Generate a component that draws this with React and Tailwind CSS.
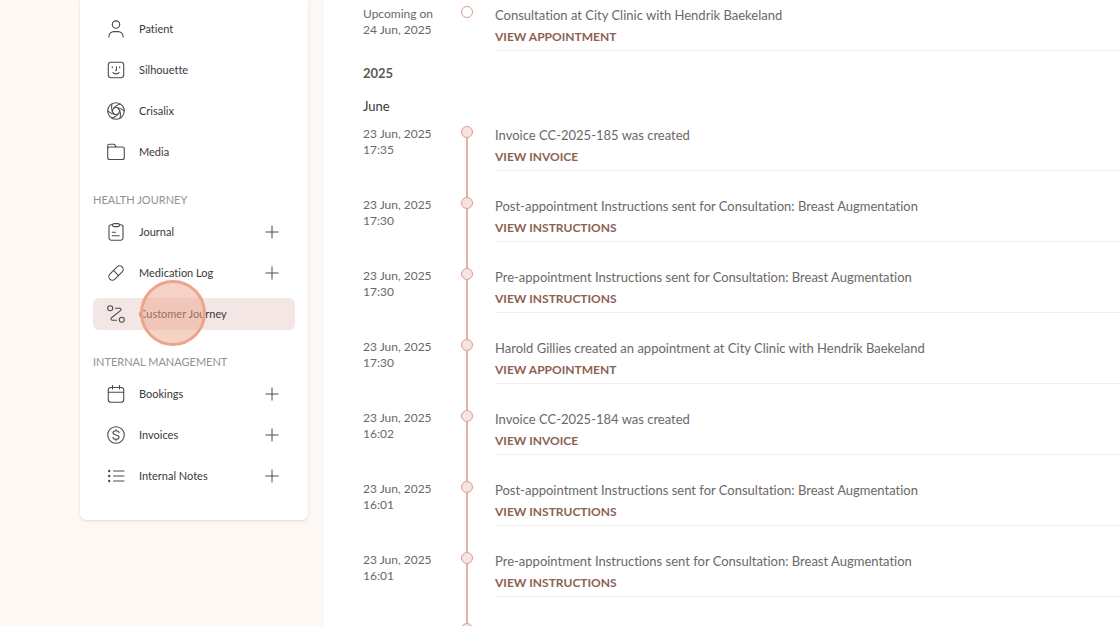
const PatientIcon = () => (
  <>
    <circle cx="9" cy="4.6" r="3.7" />
    <path d="M2 17v-.7a4.7 4.7 0 0 1 4.7-4.7h4.6a4.7 4.7 0 0 1 4.7 4.7v.7" />
  </>
)

const SilhouetteIcon = () => (
  <>
    <rect x="1.3" y="1.3" width="15.4" height="15.4" rx="2.6" />
    <path d="M5.3 5.8v1M12.7 5.8v1M9.4 5.8v3.2q0 .8-.9.8M6 11.7q3 2.4 6 0" />
  </>
)

const CrisalixIcon = () => (
  <>
    <circle cx="9" cy="9" r="8.3" />
    {[0, 60, 120, 180, 240, 300].map((angle) => (
      <path key={angle} d="M5.2 9.4Q6.4 4.3 13 1.9" transform={`rotate(${angle} 9 9)`} />
    ))}
  </>
)

const MediaIcon = () => (
  <>
    <path d="M.7 5V3a1.8 1.8 0 0 1 1.8-1.8h4.2q.9 0 1.3.8l.9 2h6.4a2 2 0 0 1 2 2v8.5a2 2 0 0 1-2 2H2.7a2 2 0 0 1-2-2z" />
    <path d="M.7 5.2q.5-1.2 2-1.2h6.2" />
  </>
)

const JournalIcon = () => (
  <>
    <path d="M5.5 1.8H4.2A2.2 2.2 0 0 0 2 4v11a2.2 2.2 0 0 0 2.2 2.2h9.6A2.2 2.2 0 0 0 16 15V4a2.2 2.2 0 0 0-2.2-2.2h-1.3" />
    <rect x="5.5" y=".6" width="7" height="3" rx="1.5" />
    <path d="M5.3 9.3h3.2M5.3 12.8h7" />
  </>
)

const MedicationIcon = () => (
  <g transform="rotate(-45 9 9)">
    <rect x=".3" y="5.4" width="17.4" height="7.2" rx="3.6" />
    <path d="M9 5.4v7.2" />
  </g>
)

const JourneyIcon = () => (
  <>
    <circle cx="3.2" cy="3.2" r="2.5" />
    <circle cx="14.8" cy="14.8" r="2.5" />
    <path d="M8.5 3.2h4.2q2.2.5.8 2.4L4.5 12.8q-1.4 2 .8 2.5h4.2" />
  </>
)

const BookingsIcon = () => (
  <>
    <rect x="1.3" y="2.5" width="15.4" height="14.8" rx="2.6" />
    <path d="M1.3 7.2h15.4M5.5.5v3.5M12.5.5v3.5" />
  </>
)

const InvoicesIcon = () => (
  <>
    <circle cx="9" cy="9" r="8.3" />
    <path d="M9 3.5v1.2M9 13.3v1.2M12 6.8c0-1.3-1.2-2.1-3-2.1s-3 .8-3 2.1c0 3 6 1.4 6 4.4 0 1.3-1.2 2.1-3 2.1s-3-.8-3-2.1" />
  </>
)

const NotesIcon = () => (
  <>
    <path d="M6.5 4H17M6.5 9H17M6.5 14H17" />
    <path strokeWidth="2.4" d="M2.2 4h.01M2.2 9h.01M2.2 14h.01" />
  </>
)

const sections = [
  {
    title: null,
    items: [
      { label: 'Patient', icon: PatientIcon },
      { label: 'Silhouette', icon: SilhouetteIcon },
      { label: 'Crisalix', icon: CrisalixIcon },
      { label: 'Media', icon: MediaIcon },
    ],
  },
  {
    title: 'HEALTH JOURNEY',
    items: [
      { label: 'Journal', icon: JournalIcon, canAdd: true },
      { label: 'Medication Log', icon: MedicationIcon, canAdd: true },
      { label: 'Customer Journey', icon: JourneyIcon, active: true },
    ],
  },
  {
    title: 'INTERNAL MANAGEMENT',
    items: [
      { label: 'Bookings', icon: BookingsIcon, canAdd: true },
      { label: 'Invoices', icon: InvoicesIcon, canAdd: true },
      { label: 'Internal Notes', icon: NotesIcon, canAdd: true },
    ],
  },
]

const events = [
  { time: '17:35', title: 'Invoice CC-2025-185 was created', action: 'VIEW INVOICE' },
  { time: '17:30', title: 'Post-appointment Instructions sent for Consultation: Breast Augmentation', action: 'VIEW INSTRUCTIONS' },
  { time: '17:30', title: 'Pre-appointment Instructions sent for Consultation: Breast Augmentation', action: 'VIEW INSTRUCTIONS' },
  { time: '17:30', title: 'Harold Gillies created an appointment at City Clinic with Hendrik Baekeland', action: 'VIEW APPOINTMENT' },
  { time: '16:02', title: 'Invoice CC-2025-184 was created', action: 'VIEW INVOICE' },
  { time: '16:01', title: 'Post-appointment Instructions sent for Consultation: Breast Augmentation', action: 'VIEW INSTRUCTIONS' },
  { time: '16:01', title: 'Pre-appointment Instructions sent for Consultation: Breast Augmentation', action: 'VIEW INSTRUCTIONS' },
  { time: '16:01', title: 'Harold Gillies created an appointment at City Clinic with Hendrik Baekeland', action: 'VIEW APPOINTMENT' },
]

const NavItem = ({ item }) => {
  const Icon = item.icon
  return (
    <li className={`relative flex h-8 items-center rounded-md pr-4 pl-3.5 ${item.active ? 'bg-[#f4e6e4]' : ''}`}>
      <a href="#" className="flex flex-1 items-center gap-3.5 text-[11px] text-[#3a3837]">
        <svg viewBox="0 0 18 18" fill="none" stroke="#4d4b4a" strokeWidth="1.1" strokeLinecap="round" strokeLinejoin="round" className="size-[18px] shrink-0" aria-hidden="true">
          <Icon />
        </svg>
        {item.label}
      </a>
      {item.canAdd && (
        <button type="button" aria-label={`Add ${item.label}`}>
          <svg viewBox="0 0 14 14" fill="none" stroke="#4d4b4a" className="size-3.5" aria-hidden="true">
            <path d="M7 .5v13M.5 7h13" />
          </svg>
        </button>
      )}
      {item.active && (
        <span className="pointer-events-none absolute -top-[18px] left-[47px] size-[66px] rounded-full border-3 border-[#eba58c] bg-[#eba58c]/50" />
      )}
    </li>
  )
}

const TimelineRow = ({ lines, title, action, upcoming }) => (
  <li className="flex">
    <div className="w-[98px] shrink-0 text-xs leading-4 text-[#6b6866]">
      <div>{lines[0]}</div>
      <div>{lines[1]}</div>
    </div>
    <div className="mr-[22px] flex w-3 shrink-0 flex-col items-center">
      <span className={`size-3 shrink-0 rounded-full border border-[#d99f8c] ${upcoming ? 'bg-white' : 'bg-[#f7e3df]'}`} />
      {!upcoming && <span className="w-0.5 flex-1 bg-[#e0b3a4]" />}
    </div>
    <div className={`min-w-0 flex-1 ${upcoming ? '' : 'pb-[26px]'}`}>
      <div className="border-b border-[#f0efee] pb-[3px]">
        <p className="text-[13px] leading-[18px] text-[#6b6866]">{title}</p>
        <a href="#" className="mt-[3px] block text-xs leading-5 font-bold text-[#8b6250]">{action}</a>
      </div>
    </div>
  </li>
)

const App = () => {
  return (
    <div className="flex h-screen items-start overflow-hidden bg-[#fef8f4] font-['Lato',sans-serif] [font-variant-ligatures:none]">
      <nav className="mr-4 ml-20 w-[228px] shrink-0 rounded-b-md bg-white px-[13px] pt-[13px] pb-7 shadow">
        {sections.map((section, index) => (
          <div key={index}>
            {section.title && (
              <h2 className="mt-6 mb-2 text-[11px] leading-4 text-[#94918f]">{section.title}</h2>
            )}
            <ul className="space-y-[9px]">
              {section.items.map((item) => (
                <NavItem key={item.label} item={item} />
              ))}
            </ul>
          </div>
        ))}
      </nav>

      <main className="min-h-screen min-w-0 flex-1 bg-white pt-1.5 pl-[39px]">
        <ul>
          <TimelineRow
            lines={['Upcoming on', '24 Jun, 2025']}
            title="Consultation at City Clinic with Hendrik Baekeland"
            action="VIEW APPOINTMENT"
            upcoming
          />
        </ul>
        <h2 className="mt-3 text-[13px] leading-5 font-bold text-[#5c5957]">2025</h2>
        <h3 className="mt-3 mb-[9px] text-[13px] leading-[22px] text-[#3a3837]">June</h3>
        <ul>
          {events.map((event, index) => (
            <TimelineRow
              key={index}
              lines={['23 Jun, 2025', event.time]}
              title={event.title}
              action={event.action}
            />
          ))}
        </ul>
      </main>
    </div>
  )
}

export default App
